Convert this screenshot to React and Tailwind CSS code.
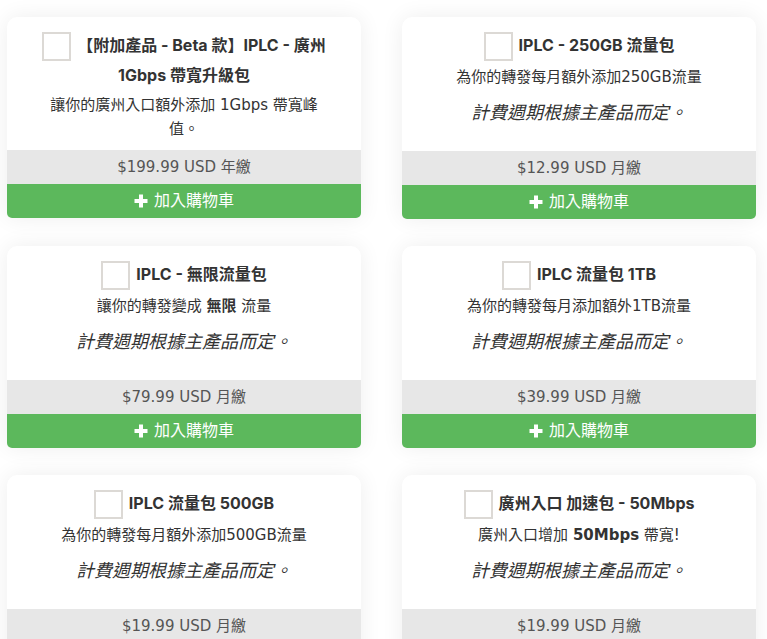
const products = [
  {
    title: '【附加產品 - Beta 款】IPLC - 廣州 1Gbps 帶寬升級包',
    desc: <>讓你的廣州入口額外添加 1Gbps 帶寬峰值。</>,
    note: false,
    price: '$199.99 USD 年繳',
  },
  {
    title: 'IPLC - 250GB 流量包',
    desc: <>為你的轉發每月額外添加250GB流量</>,
    note: true,
    price: '$12.99 USD 月繳',
  },
  {
    title: 'IPLC - 無限流量包',
    desc: <>讓你的轉發變成 <strong className="font-bold">無限</strong> 流量</>,
    note: true,
    price: '$79.99 USD 月繳',
  },
  {
    title: 'IPLC 流量包 1TB',
    desc: <>為你的轉發每月添加額外1TB流量</>,
    note: true,
    price: '$39.99 USD 月繳',
  },
  {
    title: 'IPLC 流量包 500GB',
    desc: <>為你的轉發每月額外添加500GB流量</>,
    note: true,
    price: '$19.99 USD 月繳',
  },
  {
    title: '廣州入口 加速包 - 50Mbps',
    desc: <>廣州入口增加 <strong className="font-bold">50Mbps</strong> 帶寬!</>,
    note: true,
    price: '$19.99 USD 月繳',
  },
];

const PlusIcon = () => (
  <svg width="14" height="14" viewBox="0 0 14 14" className="shrink-0">
    <path d="M7 0.5v13M0.5 7h13" stroke="white" strokeWidth="4" strokeLinecap="butt" />
  </svg>
);

const AddonCard = ({ product }) => (
  <div className="bg-white rounded-t-[10px] rounded-b-[5px] shadow-[0_0_22px_rgba(0,0,0,0.07)] overflow-hidden">
    <div className="pt-[14px] px-[30px] pb-[9px] text-center text-[#333]">
      {/* title in a narrower face so the long one wraps like the original */}
      <h3
        className="text-[16px] font-bold leading-[28px]"
        style={{ fontFamily: 'Inter, "Noto Sans CJK TC", sans-serif' }}
      >
        <span className="inline-block w-[29px] h-[29px] border-2 border-[#dcd9d5] bg-white align-middle mr-[6px]" />
        {product.title}
      </h3>
      <p className="text-[15px] leading-[24px] mt-[4px]">{product.desc}</p>
      {product.note && (
        <p className="text-[18px] italic leading-[30px] mt-[9px] mb-[14px]">計費週期根據主產品而定。</p>
      )}
    </div>
    <div className="bg-[#e7e7e7] h-[34px] flex items-center justify-center text-[15px] text-[#555]">
      {product.price}
    </div>
    <button className="w-full h-[34px] bg-[#5cb85c] flex items-center justify-center gap-[6px] text-white text-[16px]">
      <PlusIcon />
      加入購物車
    </button>
  </div>
);

export default function App() {
  return (
    <div
      className="min-h-screen bg-white pt-[17px] pl-[7px]"
      style={{ fontFamily: '"DejaVu Sans", "Noto Sans CJK TC", sans-serif' }}
    >
      <div className="grid grid-cols-[354px_354px] gap-x-[41px] gap-y-[27px] items-start">
        {products.map((p, i) => (
          <AddonCard key={i} product={p} />
        ))}
      </div>
    </div>
  );
}
